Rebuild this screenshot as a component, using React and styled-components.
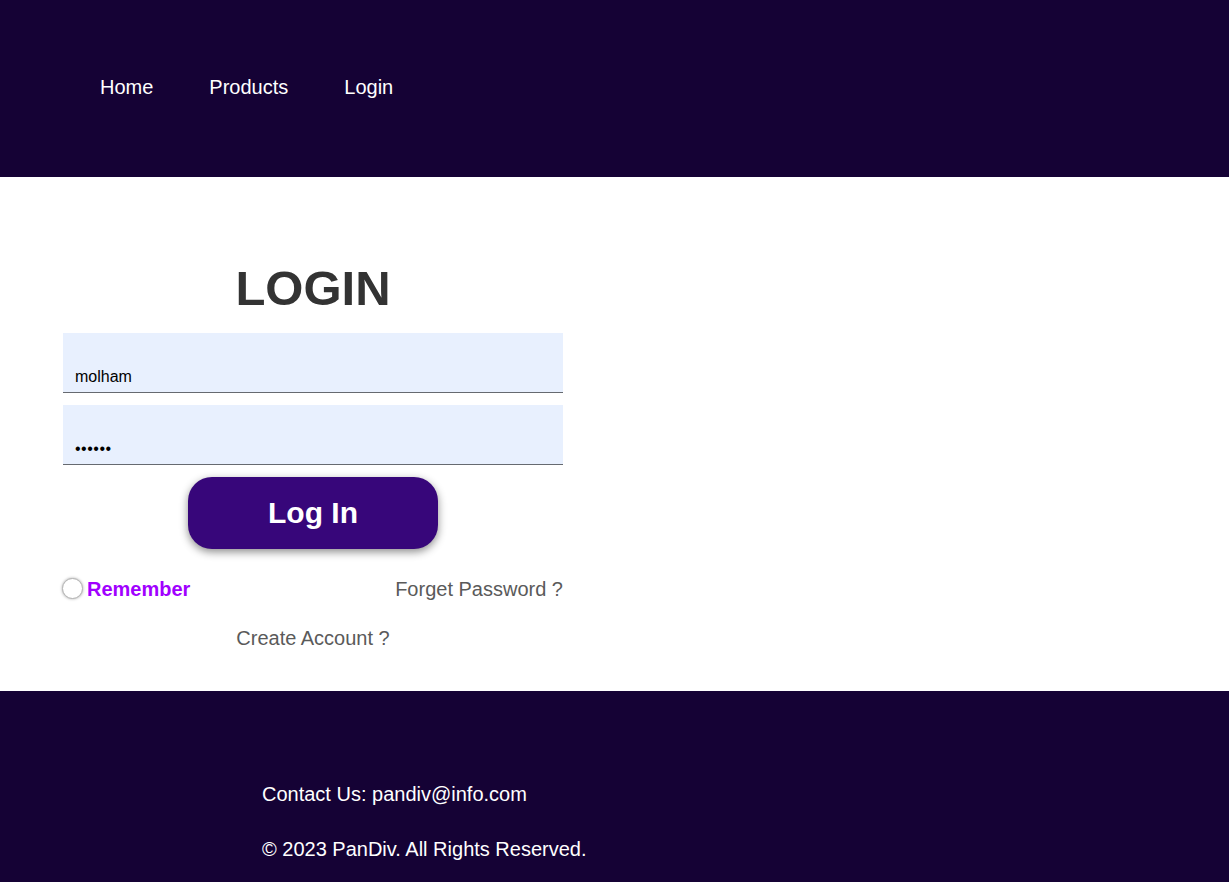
import styled, { createGlobalStyle } from "styled-components";

const GlobalStyle = createGlobalStyle`
  * { box-sizing: border-box; }
  body {
    margin: 0;
    font-family: "Liberation Sans", Arial, sans-serif;
    background: #ffffff;
  }
`;

const Header = styled.header`
  height: 177px;
  background: #150235;
  display: flex;
  align-items: center;
  padding: 0 0 2px 100px;
`;

const Nav = styled.nav`
  display: flex;
  gap: 56px;
`;

const NavLink = styled.a`
  color: #ffffff;
  font-size: 20px;
  text-decoration: none;
  cursor: pointer;
`;

const Main = styled.main`
  height: 514px;
  padding: 83px 0 0 63px;
`;

const Form = styled.form`
  width: 500px;
  display: flex;
  flex-direction: column;
  align-items: center;
`;

const Title = styled.h1`
  margin: 0 0 17px;
  font-size: 49px;
  font-weight: bold;
  color: #333333;
  line-height: 56px;
`;

const Input = styled.input`
  width: 100%;
  height: 60px;
  border: none;
  border-bottom: 1px solid #666a70;
  background: #e8f0fe;
  padding: 28px 12px 0;
  font-family: "Liberation Sans", Arial, sans-serif;
  font-size: 16px;
  color: #000000;
  outline: none;
  margin-bottom: 12px;
  letter-spacing: ${(p) => (p.type === "password" ? "0.5px" : "normal")};
`;

const SubmitButton = styled.button`
  width: 250px;
  height: 72px;
  border: none;
  border-radius: 24px;
  background: #37067a;
  color: #ffffff;
  font-family: "Liberation Sans", Arial, sans-serif;
  font-size: 30px;
  font-weight: bold;
  box-shadow: 0 3px 8px rgba(0, 0, 0, 0.45);
  cursor: pointer;
  margin-bottom: 26px;
`;

const OptionsRow = styled.div`
  width: 100%;
  display: flex;
  justify-content: space-between;
  align-items: center;
  height: 28px;
`;

const RememberLabel = styled.label`
  display: flex;
  align-items: center;
  gap: 4px;
  color: #a100ff;
  font-size: 20px;
  font-weight: bold;
  cursor: pointer;
`;

const Radio = styled.input`
  appearance: none;
  margin: -2px 0 0 -1px;
  width: 21px;
  height: 21px;
  border-radius: 50%;
  border: 1px solid #b3b3b3;
  background: #ffffff;
  box-shadow: 0 0 3px rgba(0, 0, 0, 0.35);
`;

const TextLink = styled.a`
  color: #5a5a5a;
  font-size: 20px;
  text-decoration: none;
  cursor: pointer;
  margin-top: ${(p) => p.$top || 0}px;
`;

const Footer = styled.footer`
  height: 191px;
  background: #150235;
  padding: 92px 0 0 262px;
  color: #ffffff;
  font-size: 20px;
`;

const FooterLine = styled.p`
  margin: 0 0 32px;
  line-height: 23px;
`;

export default function App() {
  return (
    <>
      <GlobalStyle />
      <Header>
        <Nav>
          <NavLink>Home</NavLink>
          <NavLink>Products</NavLink>
          <NavLink>Login</NavLink>
        </Nav>
      </Header>
      <Main>
        <Form onSubmit={(e) => e.preventDefault()}>
          <Title>LOGIN</Title>
          <Input type="text" defaultValue="molham" />
          <Input type="password" defaultValue="123456" />
          <SubmitButton type="submit">Log In</SubmitButton>
          <OptionsRow>
            <RememberLabel>
              <Radio type="radio" />
              Remember
            </RememberLabel>
            <TextLink>Forget Password ?</TextLink>
          </OptionsRow>
          <TextLink $top={24}>Create Account ?</TextLink>
        </Form>
      </Main>
      <Footer>
        <FooterLine>Contact Us: pandiv@info.com</FooterLine>
        <FooterLine>© 2023 PanDiv. All Rights Reserved.</FooterLine>
      </Footer>
    </>
  );
}
